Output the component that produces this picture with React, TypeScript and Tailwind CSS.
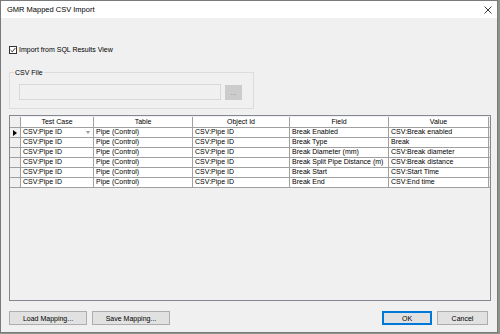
import React from "react";

const columns = [
  { title: "Test Case", width: "w-[73px]" },
  { title: "Table", width: "w-[99px]" },
  { title: "Object Id", width: "w-[97px]" },
  { title: "Field", width: "w-[99px]" },
  { title: "Value", width: "w-[100px]" },
];

const rows = [
  ["CSV:Pipe ID", "Pipe (Control)", "CSV:Pipe ID", "Break Enabled", "CSV:Break enabled"],
  ["CSV:Pipe ID", "Pipe (Control)", "CSV:Pipe ID", "Break Type", "Break"],
  ["CSV:Pipe ID", "Pipe (Control)", "CSV:Pipe ID", "Break Diameter (mm)", "CSV:Break diameter"],
  ["CSV:Pipe ID", "Pipe (Control)", "CSV:Pipe ID", "Break Split Pipe Distance (m)", "CSV:Break distance"],
  ["CSV:Pipe ID", "Pipe (Control)", "CSV:Pipe ID", "Break Start", "CSV:Start Time"],
  ["CSV:Pipe ID", "Pipe (Control)", "CSV:Pipe ID", "Break End", "CSV:End time"],
];

function DialogButton({ label, width, primary }: { label: string; width: string; primary?: boolean }) {
  return (
    <button
      type="button"
      className={
        "flex h-[14px] items-center justify-center bg-[#e1e1e1] leading-none " +
        width +
        (primary ? " border border-[#0078d7] shadow-[inset_0_0_0_1px_#0078d7]" : " border border-[#adadad]")
      }
    >
      {label}
    </button>
  );
}

export default function App() {
  return (
    <div className="flex h-[334px] w-[500px] bg-[#8c9486] font-['Liberation_Sans',sans-serif] text-[7px] text-black">
      <div className="flex h-[333px] w-[498px] flex-col border border-[#7a7a7a] bg-[#f0f0f0]">
        {/* Title bar */}
        <div className="flex h-[17px] items-center justify-between bg-white pl-[6px] pr-[5px]">
          <span className="text-[7.5px]">GMR Mapped CSV Import</span>
          <svg width="8" height="8" viewBox="0 0 8 8" className="mr-[0px]">
            <path d="M0.5 0.5 L7.5 7.5 M7.5 0.5 L0.5 7.5" stroke="#222" strokeWidth="0.9" />
          </svg>
        </div>

        <div className="flex flex-col px-[8px]">
          {/* Checkbox */}
          <div className="mt-[28px] flex h-[8px] items-center gap-[2px]">
            <span className="flex h-[8px] w-[8px] items-center justify-center border border-[#333] bg-white">
              <svg width="6" height="6" viewBox="0 0 6 6">
                <path d="M0.6 3.2 L2.3 4.8 L5.4 1" fill="none" stroke="#222" strokeWidth="0.9" />
              </svg>
            </span>
            <span>Import from SQL Results View</span>
          </div>

          {/* CSV File group */}
          <div className="relative mt-[18px] flex h-[37px] w-[245px] items-start border border-[#dcdcdc] pl-[9px] pt-[11px]">
            <span className="absolute left-[4px] top-[-5px] bg-[#f0f0f0] px-[1px] leading-[9px]">CSV File</span>
            <div className="h-[16px] w-[202px] border border-[#d9d9d9] bg-[#f0f0f0]" />
            <div className="ml-[4px] mt-[1px] flex h-[15px] w-[17px] items-center justify-center bg-[#cccccc] text-[#8a8a8a] leading-none">
              ...
            </div>
          </div>

          {/* Grid */}
          <div className="mt-[6px] h-[186px] w-[482px] border border-[#828790] bg-[#f0f0f0]">
            <div className="mt-[1px] flex h-[11px] border-b border-[#a0a0a0]">
              <div className="w-[11px] border-r border-[#a0a0a0] bg-[#f0f0f0]" />
              {columns.map((c) => (
                <div
                  key={c.title}
                  className={"flex items-center justify-center border-r border-[#a0a0a0] bg-white " + c.width}
                >
                  {c.title}
                </div>
              ))}
            </div>
            {rows.map((r, i) => (
              <div key={i} className="flex h-[10px] border-b border-[#a0a0a0]">
                <div className="flex w-[11px] items-center justify-center border-r border-[#a0a0a0] bg-[#f0f0f0]">
                  {i === 0 && (
                    <svg width="4" height="6" viewBox="0 0 4 6">
                      <path d="M0 0 L4 3 L0 6 Z" fill="#000" />
                    </svg>
                  )}
                </div>
                {r.map((v, j) => (
                  <div
                    key={j}
                    className={
                      "flex items-center justify-between overflow-hidden whitespace-nowrap border-r border-[#a0a0a0] bg-white pl-[2px] pr-[3px] " +
                      columns[j].width
                    }
                  >
                    <span>{v}</span>
                    {i === 0 && j === 0 && (
                      <svg width="4" height="3" viewBox="0 0 4 3">
                        <path d="M0 0 L4 0 L2 3 Z" fill="#9a9a9a" />
                      </svg>
                    )}
                  </div>
                ))}
              </div>
            ))}
          </div>

          {/* Footer buttons */}
          <div className="mt-[10px] flex items-center">
            <DialogButton label="Load Mapping..." width="w-[78px]" />
            <div className="ml-[5px]">
              <DialogButton label="Save Mapping..." width="w-[78px]" />
            </div>
            <div className="ml-auto mr-[1px] flex gap-[5px]">
              <DialogButton label="OK" width="w-[50px]" primary />
              <DialogButton label="Cancel" width="w-[51px]" />
            </div>
          </div>
        </div>
      </div>
    </div>
  );
}
